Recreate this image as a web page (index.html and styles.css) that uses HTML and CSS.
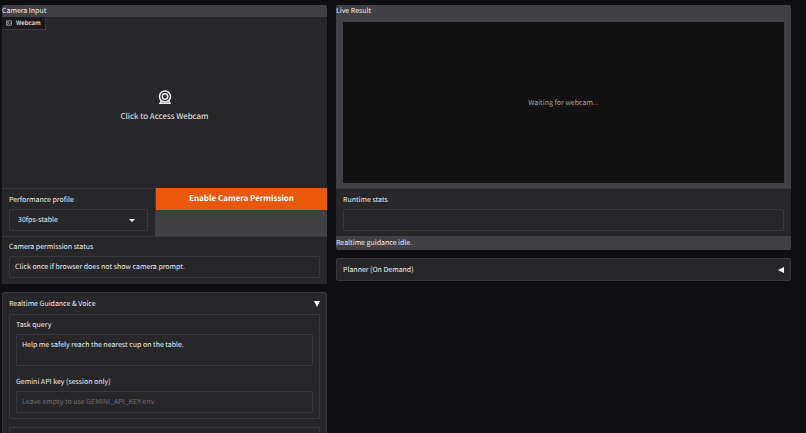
FILE: index.html
```
<!DOCTYPE html>
<html lang="en">
<head>
    <meta charset="UTF-8">
    <meta name="viewport" content="width=device-width, initial-scale=1.0">
    <title>Realtime Guidance</title>
    <link rel="stylesheet" href="styles.css">
</head>
<body>
    <main class="layout">
        <div class="column">
            <section class="group">
                <h2 class="group-title">Camera Input</h2>
                <div class="webcam">
                    <div class="webcam-tab">
                        <svg width="6" height="6" viewBox="0 0 24 24" fill="none" stroke="currentColor" stroke-width="2">
                            <rect x="2" y="3" width="20" height="18" rx="1"/>
                            <circle cx="8" cy="9" r="2"/>
                            <path d="M3 19l6-5 4 3 7-6"/>
                        </svg>
                        Webcam
                    </div>
                    <button type="button" class="webcam-access">
                        <svg width="14" height="14" viewBox="0 0 14 14" fill="none" stroke="currentColor" stroke-width="1.500">
                            <circle cx="7" cy="6.500" r="5.500"/>
                            <circle cx="7" cy="6.500" r="2.700"/>
                            <path d="M3.500 10.500L2 13.200h10L10.500 10.500"/>
                        </svg>
                        Click to Access Webcam
                    </button>
                </div>
                <div class="row">
                    <div class="block">
                        <label for="profile">Performance profile</label>
                        <div class="select-wrap">
                            <select id="profile" class="field">
                                <option>30fps-stable</option>
                            </select>
                        </div>
                    </div>
                    <div class="action">
                        <button type="button" class="primary-button">Enable Camera Permission</button>
                    </div>
                </div>
                <div class="block block-status">
                    <label for="permission">Camera permission status</label>
                    <input type="text" id="permission" class="field" value="Click once if browser does not show camera prompt." readonly>
                </div>
            </section>

            <section class="accordion">
                <button type="button" class="accordion-header" aria-expanded="true">
                    Realtime Guidance &amp; Voice
                    <svg width="6" height="6" viewBox="0 0 6 6" fill="currentColor"><path d="M0 0h6L3 6z"/></svg>
                </button>
                <div class="form">
                    <div class="form-item">
                        <label for="task">Task query</label>
                        <textarea id="task" class="field" rows="2">Help me safely reach the nearest cup on the table.</textarea>
                    </div>
                    <div class="form-item">
                        <label for="apiKey">Gemini API key (session only)</label>
                        <input type="password" id="apiKey" class="field" placeholder="Leave empty to use GEMINI_API_KEY env">
                    </div>
                </div>
                <div class="form form-next"></div>
            </section>
        </div>

        <div class="column">
            <section class="group">
                <h2 class="group-title">Live Result</h2>
                <div class="live">
                    <div class="live-view">Waiting for webcam...</div>
                </div>
                <div class="block">
                    <label for="stats">Runtime stats</label>
                    <input type="text" id="stats" class="field" readonly>
                </div>
                <p class="guidance">Realtime guidance idle.</p>
            </section>

            <section class="accordion">
                <button type="button" class="accordion-header" aria-expanded="false">
                    Planner (On Demand)
                    <svg width="6" height="6" viewBox="0 0 6 6" fill="currentColor"><path d="M6 0v6L0 3z"/></svg>
                </button>
            </section>
        </div>
    </main>
</body>
</html>
```
FILE: styles.css
```
* {
    margin: 0;
    padding: 0;
    box-sizing: border-box;
}

body {
    font-family: "Noto Sans CJK SC", sans-serif;
    font-size: 7px;
    font-weight: 400;
    line-height: 12px;
    text-rendering: geometricPrecision;
    color: #ececf0;
    background-color: #0f0f11;
    padding: 5px 15px 0 2px;
    height: 100vh;
    overflow: hidden;
}

button,
input,
select,
textarea {
    font: inherit;
    color: inherit;
    text-rendering: inherit;
    background: none;
    border: none;
    outline: none;
}

button {
    cursor: pointer;
}

svg {
    display: block;
    flex: none;
}

.layout {
    display: grid;
    grid-template-columns: 5fr 7fr;
    gap: 9px;
    align-items: start;
}

.column {
    display: flex;
    flex-direction: column;
    gap: 8px;
    min-width: 0;
}

.group {
    background-color: #404045;
    border-radius: 2px;
    overflow: hidden;
}

.group-title {
    font-size: 7px;
    font-weight: 400;
    line-height: 12px;
}

/* camera */
.webcam {
    position: relative;
    display: flex;
    justify-content: center;
    height: 171px;
    background-color: #27272a;
}

.webcam-tab {
    position: absolute;
    top: 0;
    left: 0;
    display: flex;
    align-items: center;
    gap: 4px;
    height: 13px;
    padding: 0 4px;
    background-color: #19191b;
    border: 1px solid #38383c;
    border-top: none;
    border-left: none;
    font-size: 6px;
    font-weight: 500;
}

.webcam-access {
    display: flex;
    flex-direction: column;
    align-items: center;
    justify-content: center;
    gap: 7px;
    padding-top: 7px;
    font-size: 8px;
}

.row {
    display: grid;
    grid-template-columns: 153px 1fr;
    gap: 1px;
}

.block {
    padding: 5px 7px;
    background-color: #27272a;
    border-top: 1px solid #38383c;
}

.block-status {
    padding-top: 4px;
    padding-bottom: 6px;
}

label {
    display: block;
    margin-bottom: 3px;
}

.field {
    display: block;
    width: 100%;
    height: 22px;
    padding: 0 5px;
    border: 1px solid #38383c;
    border-radius: 1px;
}

textarea.field {
    height: 32px;
    padding-top: 4px;
    resize: none;
}

.field::placeholder {
    color: #6d6d75;
    opacity: 1;
}

.select-wrap {
    display: flex;
    align-items: center;
}

.select-wrap::after {
    content: "";
    width: 0;
    margin-left: -19px;
    margin-right: 13px;
    border: 3px solid transparent;
    border-top-color: #fff;
    border-bottom-width: 0;
    pointer-events: none;
}

select.field {
    appearance: none;
    padding: 0 8px;
}

.primary-button {
    display: block;
    width: 100%;
    height: 22px;
    background-color: #ea580c;
    color: #fff;
    font-size: 8px;
    font-weight: 700;
}

/* live result */
.live {
    padding: 5px 7px;
}

.live-view {
    display: flex;
    align-items: center;
    justify-content: center;
    height: 161px;
    background-color: #111;
    color: #a5a5a8;
}

.guidance {
    line-height: 14px;
}

/* accordions */
.accordion {
    padding: 0 6px;
    background-color: #27272a;
    border: 1px solid #38383c;
    border-radius: 2px;
}

.accordion-header {
    display: flex;
    align-items: center;
    justify-content: space-between;
    width: 100%;
    height: 21px;
    text-align: left;
}

.accordion-header svg {
    color: #fff;
}

.form {
    display: flex;
    flex-direction: column;
    gap: 10px;
    padding: 4px 6px 5px;
    border: 1px solid #38383c;
    border-radius: 1px;
}

.form-next {
    height: 60px;
    margin-top: 8px;
}
```
